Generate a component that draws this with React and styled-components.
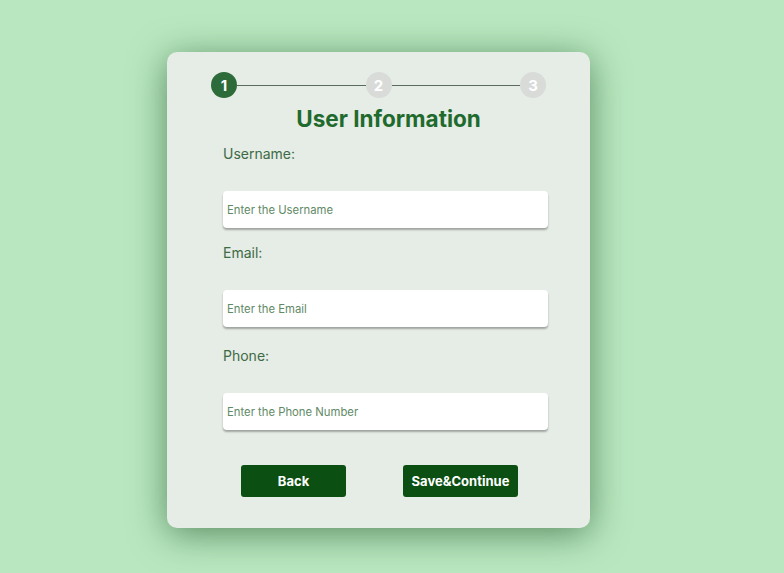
import React from "react";
import styled, { createGlobalStyle } from "styled-components";

const GlobalStyle = createGlobalStyle`
  html, body {
    margin: 0;
    padding: 0;
    background: #b9e8c0;
    font-family: "Inter", "Noto Sans", sans-serif;
  }
`;

const steps = [1, 2, 3];
const fields = [
  { label: "Username:", placeholder: "Enter the Username", gap: 16 },
  { label: "Email:", placeholder: "Enter the Email", gap: 20 },
  { label: "Phone:", placeholder: "Enter the Phone Number", gap: 0 },
];

const Page = styled.div`
  width: 784px;
  height: 573px;
  display: flex;
  padding: 52px 0 0 167px;
  box-sizing: border-box;
`;

const Card = styled.div`
  width: 423px;
  height: 476px;
  box-sizing: border-box;
  background: #e6ece6;
  border-radius: 10px;
  box-shadow: 0 6px 36px rgba(25, 75, 30, 0.6);
  padding: 20px 0 0 0;
  display: flex;
  flex-direction: column;
`;

const Stepper = styled.div`
  width: 335px;
  margin: 0 auto;
  display: flex;
  align-items: center;
`;

const Step = styled.div`
  width: 26px;
  height: 26px;
  border-radius: 50%;
  flex-shrink: 0;
  background: ${(p) => (p.$active ? "#2e6b3a" : "#d9dbd9")};
  color: #fff;
  font-weight: 700;
  font-size: 15px;
  display: flex;
  align-items: center;
  justify-content: center;
`;

const Line = styled.div`
  flex: 1;
  height: 1px;
  background: #5a6a5c;
`;

const Title = styled.h1`
  margin: 8px 0 0 0;
  text-align: center;
  font-size: 22.5px;
  line-height: 26px;
  font-weight: 700;
  color: #1f6a2d;
  padding-left: 20px;
`;

const Form = styled.div`
  margin: 13px 0 0 56px;
  width: 325px;
  display: flex;
  flex-direction: column;
`;

const Field = styled.div`
  display: flex;
  flex-direction: column;
  margin-bottom: ${(p) => p.$gap}px;
`;

const Label = styled.label`
  font-size: 14px;
  line-height: 18px;
  color: #3d6b45;
  margin-bottom: 28px;
`;

const Input = styled.input`
  height: 37px;
  box-sizing: border-box;
  border: none;
  border-radius: 4px;
  background: #fff;
  box-shadow: 0 2px 2px rgba(0, 0, 0, 0.3);
  padding: 0 4px;
  font-family: inherit;
  font-size: 11.3px;
  outline: none;
  &::placeholder {
    color: #5f8a66;
  }
`;

const Buttons = styled.div`
  display: flex;
  gap: 57px;
  padding-left: 18px;
  margin-top: 35px;
`;

const Button = styled.button`
  width: ${(p) => p.$w}px;
  height: 32px;
  border: none;
  border-radius: 3px;
  background: #0b4f13;
  color: #fff;
  font-family: inherit;
  font-weight: 700;
  font-size: 13px;
  cursor: pointer;
`;

export default function App() {
  return (
    <>
      <GlobalStyle />
      <Page>
        <Card>
          <Stepper>
            {steps.map((s, i) => (
              <React.Fragment key={s}>
                {i > 0 && <Line />}
                <Step $active={s === 1}>{s}</Step>
              </React.Fragment>
            ))}
          </Stepper>
          <Title>User Information</Title>
          <Form>
            {fields.map((f) => (
              <Field key={f.label} $gap={f.gap}>
                <Label>{f.label}</Label>
                <Input placeholder={f.placeholder} />
              </Field>
            ))}
            <Buttons>
              <Button $w={105}>Back</Button>
              <Button $w={115}>Save&amp;Continue</Button>
            </Buttons>
          </Form>
        </Card>
      </Page>
    </>
  );
}
